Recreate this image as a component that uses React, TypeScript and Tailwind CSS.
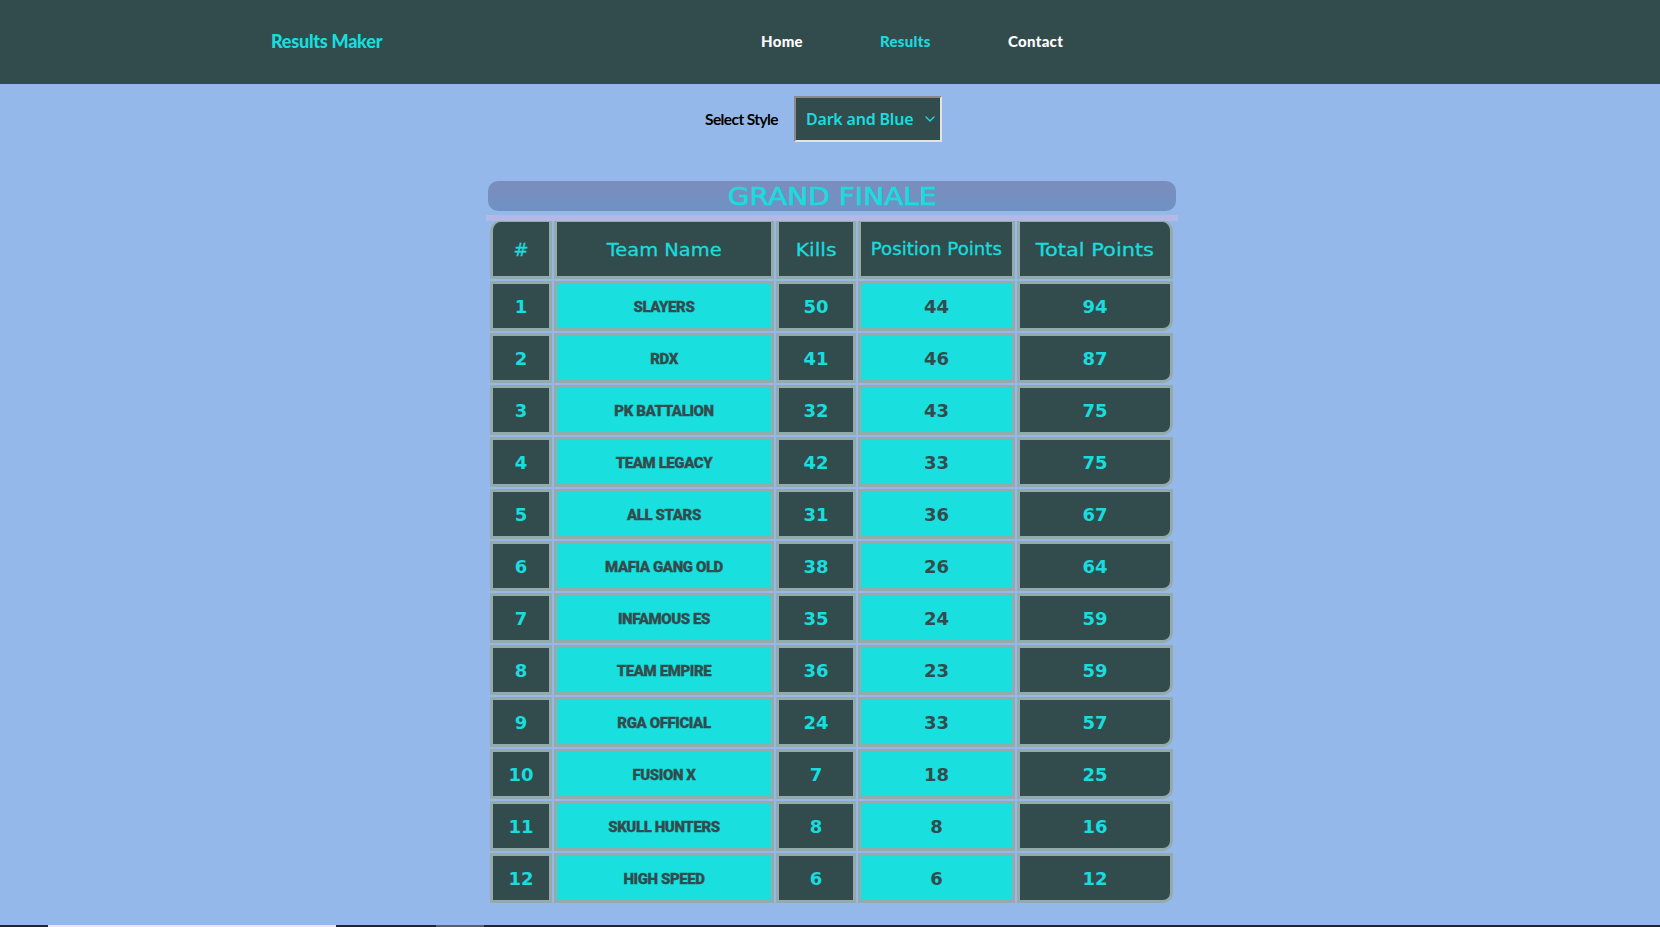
import { ChevronDown } from "lucide-react";

const rows = [
  ["SLAYERS", 50, 44, 94],
  ["RDX", 41, 46, 87],
  ["PK BATTALION", 32, 43, 75],
  ["TEAM LEGACY", 42, 33, 75],
  ["ALL STARS", 31, 36, 67],
  ["MAFIA GANG OLD", 38, 26, 64],
  ["INFAMOUS ES", 35, 24, 59],
  ["TEAM EMPIRE", 36, 23, 59],
  ["RGA OFFICIAL", 24, 33, 57],
  ["FUSION X", 7, 18, 25],
  ["SKULL HUNTERS", 8, 8, 16],
  ["HIGH SPEED", 6, 6, 12],
];

const nav = "font-['Lato'] font-black text-[15px] tracking-[0.3px]";
const cell = "border-[3px] border-[#95abab] text-center p-0";
const dark = "bg-[#324c4d] text-[#19dcdf]";
const light = "bg-[#19dfdf] text-[#324c4d]";
const num = "font-['DejaVu_Sans'] font-bold text-[18px]";
const head = "border-t-[1px] font-['DejaVu_Sans'] font-normal [-webkit-text-stroke:0.3px]";

export default function App() {
  return (
    <div className="h-screen flex flex-col bg-[#95b8ea] overflow-hidden">
      <header className="h-[84px] shrink-0 bg-[#324c4d] flex items-center pb-[2px]">
        <div className="w-[271px]" />
        <a className="w-[490px] font-['Lato'] font-black text-[18px] tracking-[-0.25px] text-[#19dcdf]">Results Maker</a>
        <nav className="flex">
          <a className={`${nav} text-white w-[119px]`}>Home</a>
          <a className={`${nav} text-[#19dcdf] w-[128px]`}>Results</a>
          <a className={`${nav} text-white`}>Contact</a>
        </nav>
      </header>

      <main className="flex-1 flex flex-col items-center">
        <div className="flex items-center mt-[12px] ml-[-13px]">
          <label className="mt-[2px] font-['Lato'] font-bold text-[15.5px] tracking-[-0.6px] text-black mr-[16px]">Select Style</label>
          <div className="relative">
            <select className="block appearance-none w-[148px] h-[46px] pl-[10px] pr-[20px] bg-[#324c4d] text-[#19dcdf] font-['Noto_Sans'] font-semibold text-[16px] tracking-[-0.2px] border-2 border-t-[#8a8a8a] border-l-[#8a8a8a] border-r-[#e3e3e3] border-b-[#e3e3e3]">
              <option>Dark and Blue</option>
            </select>
            <ChevronDown className="absolute right-[4px] top-[15px] w-[16px] h-[16px] text-[#19dcdf]" />
          </div>
        </div>

        <div className="w-[692px] mt-[39px] ml-[4px]">
          <div className="border-b-[6px] border-[#b3b8e4] pb-[4px] px-[2px]">
            <h1 className="h-[30px] rounded-[10px] bg-gradient-to-b from-[#7d8cbe] to-[#6c93c3] text-center font-['DejaVu_Sans'] font-normal text-[24px] leading-[32px] [-webkit-text-stroke:0.6px] text-[#19dcdf]">
              <span className="inline-block scale-x-[1.17]">GRAND FINALE</span>
            </h1>
          </div>
          <table className="ml-[2px] mt-[-2px] border-separate border-spacing-[2px] table-fixed w-[687px]">
            <colgroup>
              <col className="w-[62px]" />
              <col className="w-[220px]" />
              <col className="w-[80px]" />
              <col className="w-[157px]" />
              <col className="w-[156px]" />
            </colgroup>
            <thead>
              <tr className="h-[58px]">
                <th className={`${cell} ${dark} ${head} text-[18px] rounded-tl-[10px]`}>#</th>
                <th className={`${cell} ${dark} ${head} text-[18px]`}><span className="inline-block scale-x-[1.08]">Team Name</span></th>
                <th className={`${cell} ${dark} ${head} text-[18px]`}><span className="inline-block scale-x-[1.13]">Kills</span></th>
                <th className={`${cell} ${dark} ${head} pt-[2px] text-[17px]`}><span className="inline-block scale-x-[1.07]">Position Points</span></th>
                <th className={`${cell} ${dark} ${head} text-[18px] rounded-tr-[10px]`}><span className="inline-block scale-x-[1.16]">Total Points</span></th>
              </tr>
            </thead>
            <tbody>
              {rows.map((r, i) => (
                <tr key={i} className="h-[50px]">
                  <td className={`${cell} ${dark} ${num}`}>{i + 1}</td>
                  <td className={`${cell} ${light} pt-[2px] font-['Roboto'] font-black text-[15px] tracking-[-0.4px] [-webkit-text-stroke:0.3px]`}>{r[0]}</td>
                  <td className={`${cell} ${dark} ${num}`}>{r[1]}</td>
                  <td className={`${cell} ${light} ${num}`}>{r[2]}</td>
                  <td className={`${cell} ${dark} ${num} rounded-br-[10px]`}>{r[3]}</td>
                </tr>
              ))}
            </tbody>
          </table>
        </div>
      </main>

      <div className="h-[2px] shrink-0 bg-[#20262b] flex">
        <div className="w-[48px]" />
        <div className="w-[288px] bg-[#e8e8e8]" />
        <div className="w-[100px]" />
        <div className="w-[48px] bg-[#55606a]" />
      </div>
    </div>
  );
}
